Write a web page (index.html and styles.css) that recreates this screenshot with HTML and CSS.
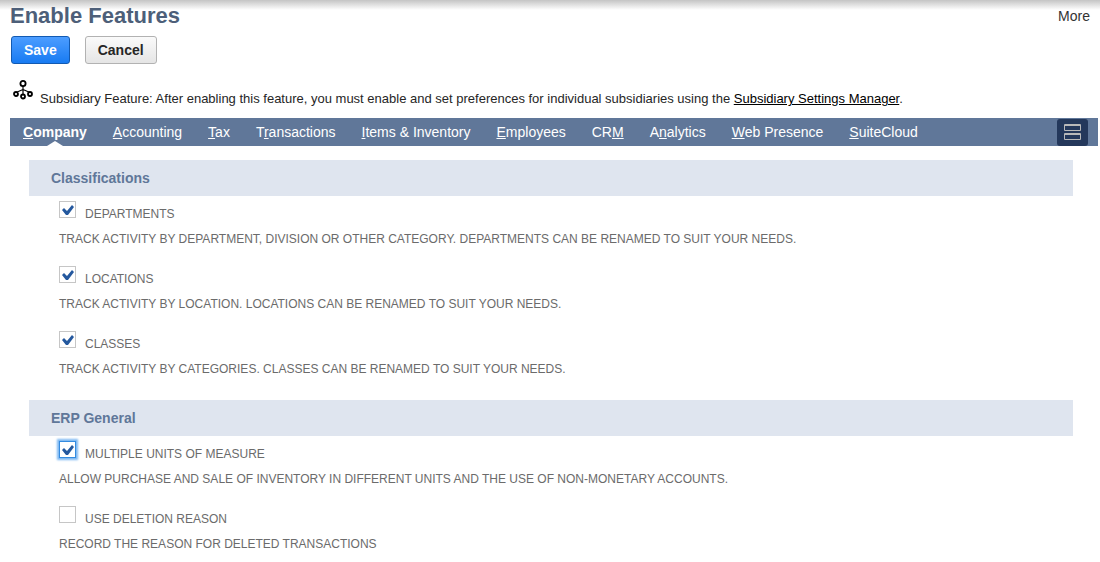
FILE: index.html
```html
<!DOCTYPE html>
<html lang="en">
<head>
<meta charset="utf-8">
<title>Enable Features</title>
<link rel="stylesheet" href="styles.css">
</head>
<body>
<div class="page">
  <header class="page-header">
    <h1 class="title">Enable Features</h1>
    <a class="more" href="#">More</a>
  </header>
  <div class="actions">
    <button class="btn btn-primary" type="button">Save</button>
    <button class="btn" type="button">Cancel</button>
  </div>
  <div class="notice">
    <svg class="notice-icon" width="20" height="20" viewBox="0 0 20 20" fill="none" stroke="#000" aria-hidden="true">
      <path d="M10 5v9M10 9.500L3 12.500M10 9.500L17 12.500" stroke-width="1.200"/>
      <g fill="#fff" stroke-width="1.800">
        <circle cx="10" cy="3.500" r="2.600"/>
        <circle cx="3" cy="14" r="2"/>
        <circle cx="10" cy="16.500" r="2"/>
        <circle cx="17" cy="14" r="2"/>
      </g>
    </svg>
    <p class="notice-text">Subsidiary Feature: After enabling this feature, you must enable and set preferences for individual subsidiaries using the <a href="#">Subsidiary Settings Manager</a>.</p>
  </div>
  <nav class="tabs">
    <a class="tab tab-active" href="#"><u>C</u>ompany</a>
    <a class="tab" href="#"><u>A</u>ccounting</a>
    <a class="tab" href="#"><u>T</u>ax</a>
    <a class="tab" href="#">T<u>r</u>ansactions</a>
    <a class="tab" href="#"><u>I</u>tems &amp; Inventory</a>
    <a class="tab" href="#"><u>E</u>mployees</a>
    <a class="tab" href="#">CR<u>M</u></a>
    <a class="tab" href="#">A<u>n</u>alytics</a>
    <a class="tab" href="#"><u>W</u>eb Presence</a>
    <a class="tab" href="#"><u>S</u>uiteCloud</a>
    <button class="layout-toggle" type="button" aria-label="Toggle layout">
      <svg width="17" height="17" viewBox="0 0 17 17" fill="none" stroke="#b9b9b9" aria-hidden="true">
        <path d="M.5 .5h16v6H.5zM.5 9.500h16v6H.5zM0 1.500h17M0 10.500h17"/>
      </svg>
    </button>
  </nav>
  <main class="content">
    <section class="group">
      <h2 class="group-title">Classifications</h2>
      <div class="feature">
        <label class="feature-label"><input class="check" type="checkbox" checked><span class="feature-name">DEPARTMENTS</span></label>
        <p class="feature-text">TRACK ACTIVITY BY DEPARTMENT, DIVISION OR OTHER CATEGORY. DEPARTMENTS CAN BE RENAMED TO SUIT YOUR NEEDS.</p>
      </div>
      <div class="feature">
        <label class="feature-label"><input class="check" type="checkbox" checked><span class="feature-name">LOCATIONS</span></label>
        <p class="feature-text">TRACK ACTIVITY BY LOCATION. LOCATIONS CAN BE RENAMED TO SUIT YOUR NEEDS.</p>
      </div>
      <div class="feature">
        <label class="feature-label"><input class="check" type="checkbox" checked><span class="feature-name">CLASSES</span></label>
        <p class="feature-text">TRACK ACTIVITY BY CATEGORIES. CLASSES CAN BE RENAMED TO SUIT YOUR NEEDS.</p>
      </div>
    </section>
    <section class="group">
      <h2 class="group-title">ERP General</h2>
      <div class="feature">
        <label class="feature-label"><input class="check check-focused" type="checkbox" checked><span class="feature-name">MULTIPLE UNITS OF MEASURE</span></label>
        <p class="feature-text">ALLOW PURCHASE AND SALE OF INVENTORY IN DIFFERENT UNITS AND THE USE OF NON-MONETARY ACCOUNTS.</p>
      </div>
      <div class="feature">
        <label class="feature-label"><input class="check" type="checkbox"><span class="feature-name">USE DELETION REASON</span></label>
        <p class="feature-text">RECORD THE REASON FOR DELETED TRANSACTIONS</p>
      </div>
    </section>
  </main>
</div>
</body>
</html>
```
FILE: styles.css
```css
* {
  box-sizing: border-box;
}

body {
  margin: 0;
  background: #fff linear-gradient(#c4c4c4, #fff) no-repeat 0 0 / 100% 10px;
  color: #262626;
  font-family: "Liberation Sans", Arial, sans-serif;
  font-size: 12px;
}

h1, h2, p {
  margin: 0;
}

.page {
  padding: 3px 2px 0 10px;
}

.page-header {
  display: flex;
  justify-content: space-between;
  align-items: center;
  padding-right: 8px;
}

.title {
  color: #4d5f79;
  font-size: 22px;
  line-height: 26px;
}

.more {
  color: #333;
  font-size: 14px;
  line-height: 26px;
  text-decoration: none;
}

.actions {
  display: flex;
  gap: 15px;
  padding: 7px 1px 0;
}

.btn {
  height: 28px;
  padding: 0 12px;
  border: 1px solid #b2b2b2;
  border-radius: 3px;
  background: linear-gradient(#fafafa, #e5e5e5);
  color: #262626;
  font: bold 14px/26px "Liberation Sans", Arial, sans-serif;
}

.btn-primary {
  border-color: #125ab2;
  background: linear-gradient(#4c9dff, #187bf2);
  color: #fff;
}

.notice {
  display: flex;
  gap: 7px;
  padding: 16px 3px 11px;
}

.notice-icon {
  flex: none;
}

.notice-text {
  padding-top: 11px;
  font-size: 13px;
  line-height: 16px;
}

.notice-text a {
  color: #000;
  text-underline-offset: 1px;
}

.tabs {
  display: flex;
  height: 28px;
  padding-right: 10px;
  background: #607799;
}

.tab {
  position: relative;
  padding: 0 13px;
  color: #fff;
  font-size: 14px;
  line-height: 28px;
  text-decoration: none;
  white-space: nowrap;
}

.tab u {
  text-underline-offset: 1px;
}

.tab-active {
  font-weight: bold;
}

.tab-active::after {
  content: "";
  position: absolute;
  bottom: 0;
  left: calc(50% - 8px);
  border: 8px solid transparent;
  border-top-width: 0;
  border-bottom: 5px solid #fff;
}

.layout-toggle {
  display: grid;
  place-items: center;
  width: 31px;
  height: 27px;
  margin: 1px 0 0 auto;
  padding: 0;
  border: 0;
  border-radius: 3px;
  background: #24385b;
}

.content {
  display: grid;
  gap: 9px;
  padding: 14px 25px 0 19px;
}

.group-title {
  padding-left: 22px;
  background: #dfe5ef;
  color: #607799;
  font-size: 14px;
  line-height: 36px;
}

.feature {
  padding: 5px 30px 14px;
  color: #6b6b6b;
}

.feature-label {
  display: flex;
  align-items: flex-start;
  gap: 9px;
  width: fit-content;
  padding-bottom: 9px;
}

.feature-name {
  padding-top: 5px;
  line-height: 16px;
}

.feature-text {
  line-height: 16px;
}

.check {
  flex: none;
  appearance: none;
  width: 17px;
  height: 17px;
  margin: 0;
  border: 1px solid #c6c6c6;
  background: #fff;
}

.check:checked::before {
  content: "";
  display: block;
  width: 12px;
  height: 10px;
  margin: 3px 0 0 2px;
  background: #24589e;
  clip-path: polygon(0 5px, 2px 3px, 5px 6px, 10px 0, 12px 2px, 6px 10px, 4px 10px);
}

.check-focused {
  border-color: #348be0;
  box-shadow: 0 0 2px 2px #7db8f2;
}
```
